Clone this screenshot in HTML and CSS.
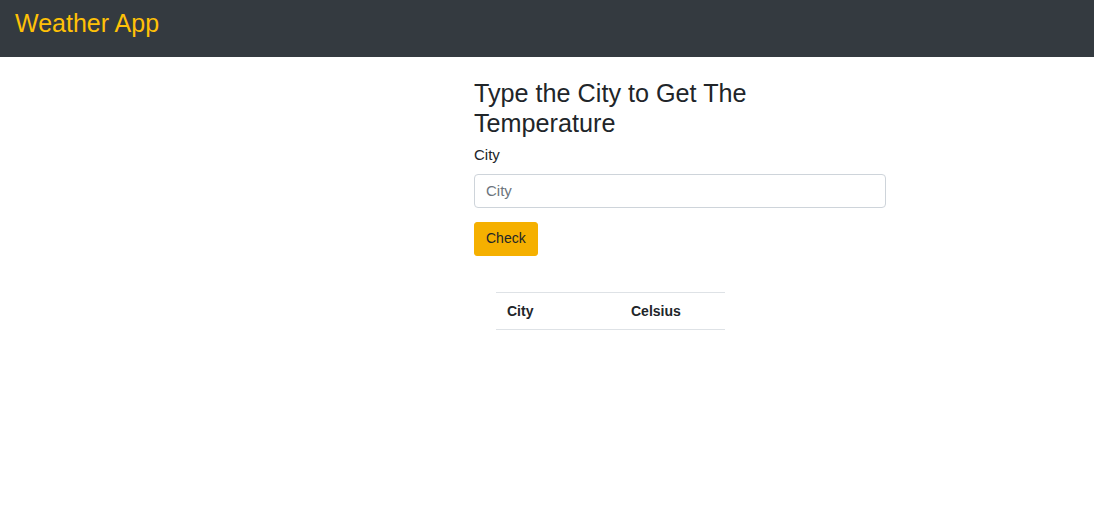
FILE: index.html
```html
<!DOCTYPE html>
<html>
<head>
<meta charset="utf-8">
<link rel="stylesheet" href="styles.css">
</head>
<body>
<nav class="navbar">
  <span class="brand">Weather App</span>
</nav>
<main class="layout">
  <section class="panel">
    <h2 class="title">Type the City to Get The Temperature</h2>
    <form class="form">
      <label class="label" for="city">City</label>
      <input class="input" id="city" type="text" placeholder="City">
      <button class="btn" type="button">Check</button>
    </form>
    <div class="table-wrap">
      <table class="table">
        <thead>
          <tr><th class="col-city">City</th><th class="col-temp">Celsius</th></tr>
        </thead>
        <tbody></tbody>
      </table>
    </div>
  </section>
</main>
</body>
</html>
```
FILE: styles.css
```css
* { box-sizing: border-box; }
body {
  margin: 0;
  font-family: "Liberation Sans", Arial, sans-serif;
  color: #212529;
  background: #fff;
}
.navbar {
  height: 57px;
  background: #343a40;
  padding: 8px 15px;
}
.brand {
  display: block;
  color: #ffc107;
  font-size: 25px;
  line-height: 30px;
}
.layout {
  display: grid;
  grid-template-columns: 474px 412px;
}
.panel {
  grid-column: 2;
  padding-top: 21px;
}
.title {
  margin: 0;
  font-size: 25.2px;
  font-weight: 400;
  line-height: 30px;
  padding-right: 130px;
}
.form {
  display: flex;
  flex-direction: column;
  align-items: flex-start;
}
.label {
  font-size: 15px;
  line-height: 22px;
  margin-top: 6px;
  margin-bottom: 8px;
}
.input {
  width: 100%;
  height: 34px;
  padding: 5px 11px 7px;
  font-family: inherit;
  font-size: 15px;
  color: #495057;
  border: 1px solid #ced4da;
  border-radius: 4px;
  background: #fff;
}
.input::placeholder { color: #6c757d; }
.btn {
  margin-top: 14px;
  height: 34px;
  padding: 5px 11px 7px;
  font-family: inherit;
  font-size: 14px;
  color: #212529;
  background: #f5b000;
  border: 1px solid #f5b000;
  border-radius: 3px;
}
.table-wrap {
  padding-left: 22px;
  margin-top: 36px;
}
.table {
  width: 229px;
  border-collapse: collapse;
  font-size: 14px;
}
.table th {
  text-align: left;
  font-weight: 700;
  padding: 9px 11px;
  line-height: 18px;
  border-top: 1px solid #dee2e6;
  border-bottom: 1px solid #dee2e6;
}
.col-city { width: 124px; }
```
